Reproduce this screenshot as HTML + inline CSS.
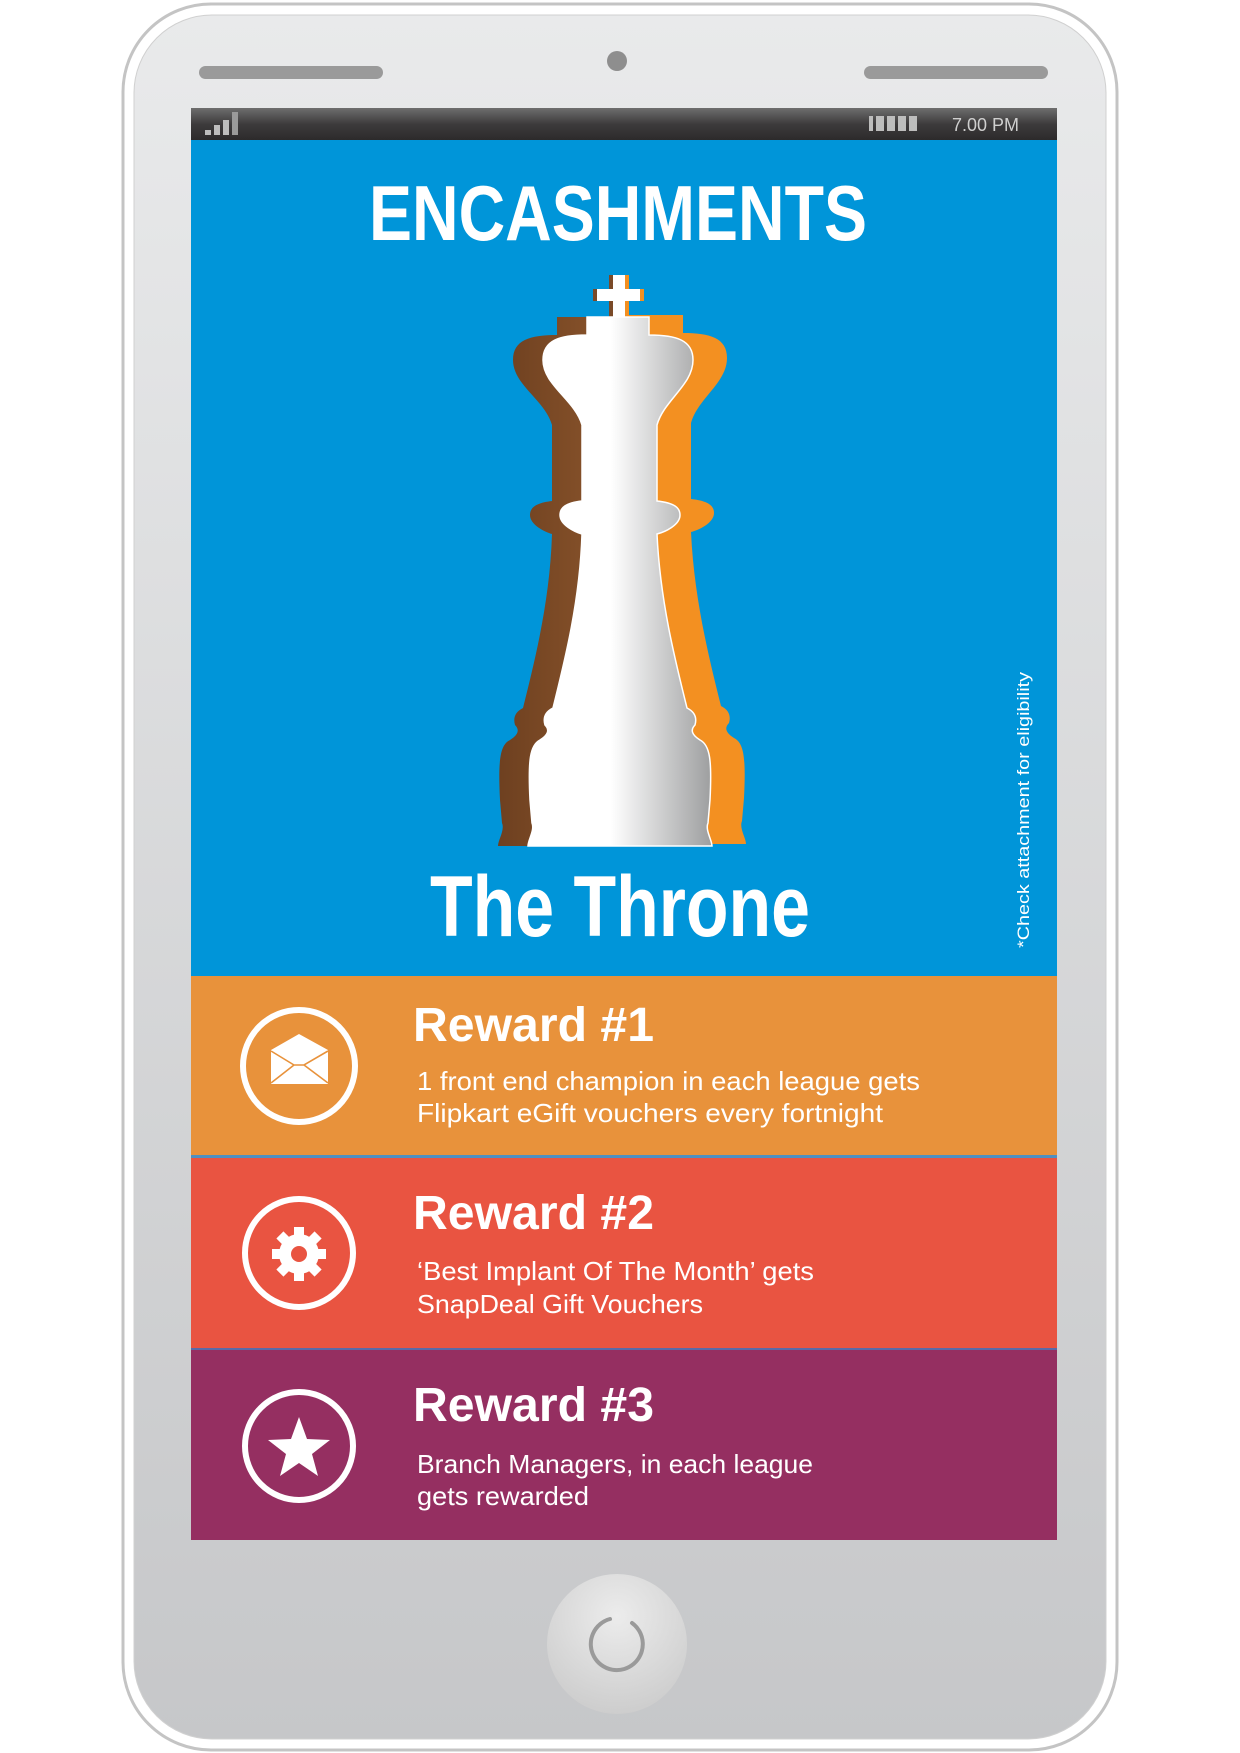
<!DOCTYPE html>
<html><head><meta charset="utf-8"><style>html,body{margin:0;padding:0;background:#fff}svg{display:block}</style></head>
<body>
<svg width="1240" height="1753" viewBox="0 0 1240 1753" xmlns="http://www.w3.org/2000/svg" font-family="'Liberation Sans', sans-serif">
<defs>
<linearGradient id="body" x1="0" y1="0" x2="0" y2="1"><stop offset="0" stop-color="#e9eaeb"/><stop offset="1" stop-color="#c6c7c9"/></linearGradient>
<linearGradient id="sb" x1="0" y1="0" x2="0" y2="1"><stop offset="0" stop-color="#6e6e6e"/><stop offset="0.5" stop-color="#3d3b3c"/><stop offset="1" stop-color="#2c2a2b"/></linearGradient>
<linearGradient id="wk" x1="0" y1="0" x2="1" y2="0"><stop offset="0" stop-color="#fff"/><stop offset="0.45" stop-color="#fff"/><stop offset="1" stop-color="#9d9e9f"/></linearGradient>
<linearGradient id="bk" x1="0" y1="0" x2="1" y2="0"><stop offset="0" stop-color="#6e4020"/><stop offset="1" stop-color="#9a6032"/></linearGradient>
<radialGradient id="hb" cx="0.5" cy="0.3" r="0.7"><stop offset="0" stop-color="#ececec"/><stop offset="1" stop-color="#cdcdcd"/></radialGradient>
<path id="kbody" d="M 587 317 L 587 335 C 560 335 543 340 543 360 C 543 385 575 400 582 425 L 582 501 C 565 503 560 508 560 515 C 560 525 575 532 582 534 C 580 600 565 660 553 708 C 545 712 543 718 545 725 C 550 730 548 735 540 740 C 530 745 528 760 530 800 L 532 823 C 535 830 528 840 528 846 L 712 846 C 712 840 705 830 708 823 L 710 800 C 712 760 710 745 700 740 C 692 735 690 730 695 725 C 697 718 695 712 687 708 C 675 660 660 600 657 534 C 665 532 680 525 680 515 C 680 508 675 503 657 501 L 657 425 C 664 400 693 385 693 360 C 693 340 676 335 649 335 L 649 317 Z"/>
<path id="cross" d="M 613 275 L 625 275 L 625 289 L 640 289 L 640 301 L 625 301 L 625 317 L 613 317 L 613 301 L 597 301 L 597 289 L 613 289 Z"/>
</defs>
<rect x="0" y="0" width="1240" height="1753" fill="#fff"/>
<rect x="123" y="4" width="994" height="1746" rx="88" fill="#fff" stroke="#c4c4c4" stroke-width="3"/>
<rect x="134" y="15" width="972" height="1724" rx="78" fill="url(#body)" stroke="#d0d0d0" stroke-width="1"/>
<rect x="199" y="66" width="184" height="13" rx="6.5" fill="#9a9a9a"/>
<rect x="864" y="66" width="184" height="13" rx="6.5" fill="#9a9a9a"/>
<circle cx="617" cy="61" r="10" fill="#8e8e8e"/>
<rect x="191" y="108" width="866" height="32" fill="url(#sb)"/>
<g fill="#bdbdbd">
<rect x="205" y="130" width="6" height="5"/><rect x="214" y="125" width="6" height="10"/><rect x="223" y="120" width="6" height="15"/><rect x="232" y="112" width="6" height="23" fill="#9a9a9a"/>
<rect x="869" y="116" width="4" height="15"/><rect x="876" y="116" width="8" height="15"/><rect x="887" y="116" width="8" height="15"/><rect x="898" y="116" width="8" height="15"/><rect x="909" y="116" width="8" height="15"/>
</g>
<text x="952" y="131" font-size="18" fill="#cfcfcf">7.00 PM</text>
<rect x="191" y="140" width="866" height="836" fill="#0095d9"/>
<text x="618" y="240" font-size="78" font-weight="bold" fill="#fff" text-anchor="middle" textLength="498" lengthAdjust="spacingAndGlyphs">ENCASHMENTS</text>
<use href="#kbody" transform="translate(34,-2)" fill="#f39021"/>
<use href="#kbody" transform="translate(-30,0)" fill="url(#bk)"/>
<use href="#cross" transform="translate(-4,0)" fill="#7a4a28"/>
<use href="#cross" transform="translate(4,0)" fill="#f39021"/>
<use href="#kbody" fill="url(#wk)" stroke="#fff" stroke-width="1.5"/>
<use href="#cross" fill="#fff"/>
<text x="620" y="936" font-size="86" font-weight="bold" fill="#fff" text-anchor="middle" textLength="380" lengthAdjust="spacingAndGlyphs">The Throne</text>
<text transform="translate(1029,948) rotate(-90)" font-size="17" fill="#fff" textLength="276" lengthAdjust="spacingAndGlyphs">*Check attachment for eligibility</text>
<rect x="191" y="976" width="866" height="179" fill="#e8923b"/>
<rect x="191" y="1155" width="866" height="3" fill="#4f8fc0"/>
<rect x="191" y="1158" width="866" height="190" fill="#e95441"/>
<rect x="191" y="1348" width="866" height="2" fill="#5a6aa8"/>
<rect x="191" y="1350" width="866" height="190" fill="#952f61"/>
<g fill="#fff">
<text x="413" y="1041" font-size="48" font-weight="bold" textLength="241" lengthAdjust="spacingAndGlyphs">Reward #1</text>
<text x="417" y="1090" font-size="26" textLength="503" lengthAdjust="spacingAndGlyphs">1 front end champion in each league gets</text>
<text x="417" y="1122" font-size="26" textLength="466" lengthAdjust="spacingAndGlyphs">Flipkart eGift vouchers every fortnight</text>
<text x="413" y="1229" font-size="48" font-weight="bold" textLength="241" lengthAdjust="spacingAndGlyphs">Reward #2</text>
<text x="417" y="1280" font-size="26" textLength="397" lengthAdjust="spacingAndGlyphs">‘Best Implant Of The Month’ gets</text>
<text x="417" y="1313" font-size="26" textLength="286" lengthAdjust="spacingAndGlyphs">SnapDeal Gift Vouchers</text>
<text x="413" y="1421" font-size="48" font-weight="bold" textLength="241" lengthAdjust="spacingAndGlyphs">Reward #3</text>
<text x="417" y="1473" font-size="26" textLength="396" lengthAdjust="spacingAndGlyphs">Branch Managers, in each league</text>
<text x="417" y="1505" font-size="26" textLength="172" lengthAdjust="spacingAndGlyphs">gets rewarded</text>
</g>
<g fill="none" stroke="#fff" stroke-width="6">
<circle cx="299" cy="1066" r="56"/>
<circle cx="299" cy="1253" r="54"/>
<circle cx="299" cy="1446" r="54"/>
</g>
<path d="M 271 1050 L 299 1034 L 328 1050 L 328 1084 L 271 1084 Z" fill="#fff"/>
<path d="M 271 1051 L 294 1065 L 304 1065 L 328 1051 M 271 1083 L 294 1065 M 328 1083 L 304 1065" fill="none" stroke="#e8923b" stroke-width="1.6"/>
<g transform="translate(299,1254)" fill="#fff">
<rect x="-5" y="-27" width="10" height="54"/><rect x="-5" y="-27" width="10" height="54" transform="rotate(45)"/><rect x="-5" y="-27" width="10" height="54" transform="rotate(90)"/><rect x="-5" y="-27" width="10" height="54" transform="rotate(135)"/>
<circle r="20"/>
<circle r="8" fill="#e95441"/>
</g>
<path d="M 299 1417 L 307 1439 L 330 1440 L 312 1454 L 318 1476 L 299 1463 L 280 1476 L 286 1454 L 268 1440 L 291 1439 Z" fill="#fff"/>
<circle cx="617" cy="1644" r="70" fill="url(#hb)"/>
<path d="M 610 1619 A 26 26 0 1 0 632 1623" fill="none" stroke="#9a9a9a" stroke-width="4" stroke-linecap="round"/>
</svg>
</body></html>
